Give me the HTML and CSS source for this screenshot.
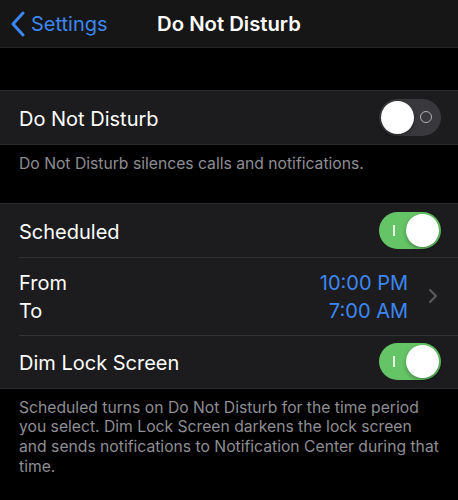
FILE: index.html
```html
<!DOCTYPE html>
<html lang="en">
<head>
    <meta charset="UTF-8">
    <meta name="viewport" content="width=device-width, initial-scale=1.0">
    <title>Do Not Disturb</title>
    <link rel="stylesheet" href="styles.css">
</head>
<body>
    <header class="navbar">
        <a class="back" href="#">
            <svg class="back-icon" width="16" height="26" viewBox="0 0 16 26">
                <path d="M13 2 L3 13 L13 24" fill="none" stroke="currentColor" stroke-width="3" stroke-linecap="round" stroke-linejoin="round"/>
            </svg>
            <span>Settings</span>
        </a>
        <h1>Do Not Disturb</h1>
        <div></div>
    </header>

    <main>
        <div class="spacer"></div>

        <section class="group">
            <div class="row">
                <span class="label">Do Not Disturb</span>
                <span class="switch"><span class="mark-off"></span><span class="knob"></span></span>
            </div>
        </section>
        <p class="note first-note">Do Not Disturb silences calls and notifications.</p>

        <section class="group">
            <div class="row">
                <span class="label">Scheduled</span>
                <span class="switch on"><span class="mark-on"></span><span class="knob"></span></span>
            </div>
            <div class="row times">
                <div class="time-labels">
                    <span>From</span>
                    <span>To</span>
                </div>
                <div class="time-values">
                    <span>10:00 PM</span>
                    <span>7:00 AM</span>
                </div>
                <svg class="chevron" width="10" height="16" viewBox="0 0 10 16">
                    <path d="M2 2 L8 8 L2 14" fill="none" stroke="currentColor" stroke-width="2" stroke-linecap="round" stroke-linejoin="round"/>
                </svg>
            </div>
            <div class="row">
                <span class="label">Dim Lock Screen</span>
                <span class="switch on"><span class="mark-on"></span><span class="knob"></span></span>
            </div>
        </section>
        <p class="note">Scheduled turns on Do Not Disturb for the time period<br>
            you select. Dim Lock Screen darkens the lock screen<br>
            and sends notifications to Notification Center during that<br>
            time.</p>
    </main>
</body>
</html>
```

FILE: styles.css
```css
body {
    font-family: Inter, "Noto Sans", sans-serif;
    background-color: #000;
    color: #fff;
    margin: 0;
    padding: 0;
}

.navbar {
    height: 47px;
    background-color: #161616;
    border-bottom: 1px solid #262628;
    display: grid;
    grid-template-columns: 1fr auto 1fr;
    align-items: center;
}

.back {
    display: flex;
    align-items: center;
    gap: 5px;
    padding-left: 10px;
    color: #3c87f3;
    text-decoration: none;
    font-size: 20px;
}

.navbar h1 {
    margin: 0;
    font-size: 20.3px;
    font-weight: 600;
}

.spacer {
    height: 42px;
}

.group {
    background-color: #1c1c1e;
    border-top: 1px solid #2a2a2c;
    border-bottom: 1px solid #2a2a2c;
}

.row {
    position: relative;
    height: 53px;
    padding: 0 17px 0 19px;
    display: flex;
    align-items: center;
    justify-content: space-between;
    font-size: 20px;
}

.row + .row::before {
    content: "";
    position: absolute;
    top: 0;
    left: 19px;
    right: 0;
    border-top: 1px solid #323234;
}

.label,
.time-labels,
.time-values {
    margin-top: 3px;
}

.switch {
    position: relative;
    width: 62px;
    height: 37px;
    border-radius: 19px;
    background-color: #39393d;
}

.switch .knob {
    position: absolute;
    top: 2px;
    left: 2px;
    width: 33px;
    height: 33px;
    border-radius: 50%;
    background: #fff;
    box-shadow: 0 2px 4px rgba(0, 0, 0, 0.3);
}

.switch.on {
    background-color: #65c466;
}

.switch.on .knob {
    left: auto;
    right: 2px;
}

.mark-off {
    position: absolute;
    top: 12px;
    right: 9px;
    width: 10px;
    height: 10px;
    border: 1.5px solid #b0b0b4;
    border-radius: 50%;
}

.mark-on {
    position: absolute;
    top: 13px;
    left: 14px;
    width: 1.5px;
    height: 11px;
    background: #e8f7e8;
}

.times {
    height: 78px;
    justify-content: flex-start;
}

.time-labels,
.time-values {
    display: flex;
    flex-direction: column;
    line-height: 28px;
}

.time-values {
    margin-left: auto;
    align-items: flex-end;
    color: #3c87f3;
}

.chevron {
    margin-left: 20px;
    margin-right: 3px;
    color: #5b5b60;
}

.note {
    margin: 0;
    padding: 9px 10px 28px 19px;
    font-size: 15.7px;
    line-height: 19.7px;
    color: #8e8e93;
}

.first-note {
    padding-bottom: 29px;
}
```
